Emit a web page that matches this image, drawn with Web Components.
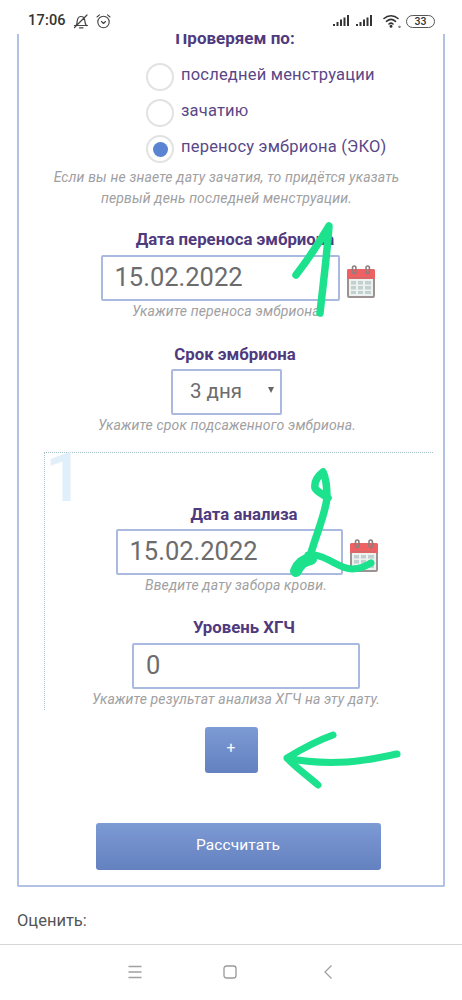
<!DOCTYPE html>
<html lang="ru">
<head>
<meta charset="utf-8">
<title>ХГЧ</title>
<style>
    html, body { margin: 0; padding: 0; background: #fff; }
    body { font-family: Roboto, "Noto Sans", sans-serif; }
</style>
</head>
<body>
<app-screen>
    <status-bar></status-bar>
    <page-view>
        <calc-card>
            <check-heading>Проверяем по:</check-heading>
            <radio-option>последней менструации</radio-option>
            <radio-option>зачатию</radio-option>
            <radio-option checked>переносу эмбриона (ЭКО)</radio-option>
            <hint-text style="--hint-right:9px">Если вы не знаете дату зачатия, то придётся указать<br>первый день последней менструации.</hint-text>

            <form-field label="Дата переноса эмбриона" hint="Укажите переноса эмбриона" style="margin-top:20px;--label-left:8px;--control-left:14px;--hint-right:10px">
                <date-input value="15.02.2022" width="239"></date-input>
            </form-field>
            <form-field label="Срок эмбриона" hint="Укажите срок подсаженного эмбриона." style="margin-top:22px;--label-left:8px;--control-right:9px;--hint-right:8px;--label-gap:5px">
                <select-box value="3 дня"></select-box>
            </form-field>

            <analysis-block number="1">
                <form-field label="Дата анализа" hint="Введите дату забора крови." style="--label-left:10px;--control-left:16px;--hint-right:6px;--label-gap:5px">
                    <date-input value="15.02.2022" width="227"></date-input>
                </form-field>
                <form-field label="Уровень ХГЧ" hint="Укажите результат анализа ХГЧ на эту дату." style="margin-top:21px;--label-left:10px;--control-left:14px;--hint-right:6px">
                    <text-box value="0" width="228"></text-box>
                </form-field>
            </analysis-block>

            <blue-button kind="add">+</blue-button>
            <blue-button kind="submit">Рассчитать</blue-button>
        </calc-card>
        <rate-line>Оценить:</rate-line>
    </page-view>
    <nav-bar></nav-bar>
    <ink-notes></ink-notes>
</app-screen>

<script>
    const define = (name, html, init) => {
        customElements.define(name, class extends HTMLElement {
            constructor() {
                super();
                const shadow = this.attachShadow({ mode: 'open' });
                const template = document.createElement('template');
                template.innerHTML = html;
                shadow.appendChild(template.content.cloneNode(true));
            }
            connectedCallback() {
                if (init) init(this, this.shadowRoot);
            }
        });
    };

    const calendarIcon = `
        <svg width="30" height="34" viewBox="0 0 30 34">
            <rect x="1" y="4" width="28" height="29" rx="2" fill="#9a9391"/>
            <rect x="3" y="14" width="24" height="17" fill="#edf1ef"/>
            <path d="M1 6q0-2 2-2h24q2 0 2 2v8H1z" fill="#ef6062"/>
            <rect x="3" y="12" width="24" height="1.5" fill="#cf6a6b"/>
            <g fill="#c3d0d0">
                <rect x="5" y="16" width="5" height="3.5"/><rect x="12" y="16" width="5" height="3.5"/><rect x="19" y="16" width="6" height="3.5"/>
                <rect x="5" y="21" width="5" height="3.5"/><rect x="12" y="21" width="5" height="3.5"/><rect x="19" y="21" width="6" height="3.5"/>
                <rect x="5" y="26" width="5" height="3"/><rect x="12" y="26" width="5" height="3"/><rect x="19" y="26" width="6" height="3"/>
            </g>
            <g fill="none" stroke="#8a7f7f" stroke-width="1.6">
                <rect x="6.5" y="1" width="3.4" height="7.5" rx="1.7"/>
                <rect x="20" y="1" width="3.4" height="7.5" rx="1.7"/>
            </g>
        </svg>`;

    define('app-screen', `
        <style>
            :host { display: flex; flex-direction: column; position: relative; width: 462px; height: 1000px; overflow: hidden; background: #fff; }
        </style>
        <slot></slot>
    `);

    define('status-bar', `
        <style>
            :host { display: flex; align-items: center; justify-content: space-between; height: 34px; flex: none; padding: 8px 27px 0 28px; box-sizing: border-box; background: #fff; color: #333; }
            .side { display: flex; align-items: center; }
            .time { font: 500 14.5px/20px Roboto, sans-serif; letter-spacing: .2px; margin-right: 7px; }
            svg { display: block; }
        </style>
        <div class="side">
            <span class="time">17:06</span>
            <svg width="16" height="16" viewBox="0 0 16 16" fill="none" stroke="#444" stroke-width="1.2" stroke-linecap="round" stroke-linejoin="round">
                <path d="M1.500 12.500h13M3 12.500c1.200-1.500 1-3 1.300-5 .3-2 1.900-4 3.700-4 2 0 3.500 1.800 3.800 3.900.2 1.900.2 3.600 1.500 5.100M6.500 14.800h3.500M1.500 14.500 14 2"/>
            </svg>
            <svg width="15" height="16" viewBox="0 0 15 16" fill="none" stroke="#444" stroke-width="1.1" stroke-linecap="round" stroke-linejoin="round" style="margin-left:7px">
                <circle cx="7.500" cy="9" r="5.700"/><path d="M5.500 8.500 7.500 10.500 9.500 8.500M1 4 3.500 1.800M14 4 11.500 1.800"/>
            </svg>
        </div>
        <div class="side">
            <svg width="17" height="12" viewBox="0 0 17 12" fill="#333"><rect x="0" y="9" width="2" height="2"/><rect x="3.500" y="7" width="2" height="4"/><rect x="7" y="4.500" width="2" height="6.500"/><rect x="10.500" y="2.500" width="2" height="8.500"/><rect x="14" y="0" width="2" height="11"/></svg>
            <svg width="17" height="12" viewBox="0 0 17 12" fill="#333" style="margin-left:6px"><rect x="0" y="9" width="2" height="2"/><rect x="3.500" y="7" width="2" height="4"/><rect x="7" y="4.500" width="2" height="6.500"/><rect x="10.500" y="2.500" width="2" height="8.500"/><rect x="14" y="0" width="2" height="11"/></svg>
            <svg width="18" height="14" viewBox="0 0 18 14" fill="none" stroke="#333" stroke-width="1.600" stroke-linecap="round" style="margin-left:10px">
                <path d="M1 4.500c4-3.700 10-3.700 14 0M3.500 7.300c2.700-2.400 6.300-2.400 9 0M6 10c1.300-1.100 2.700-1.100 4 0"/><circle cx="8" cy="12.300" r=".7" fill="#333"/><circle cx="16.500" cy="12.800" r=".3" fill="#333"/>
            </svg>
            <div style="margin-left:5px;width:29px;height:13px;box-sizing:border-box;border:1px solid #555;border-radius:7px;font:500 10.5px/11px Roboto,sans-serif;text-align:center;color:#333">33</div>
        </div>
    `);

    define('page-view', `
        <style>
            :host { display: block; flex: 1; min-height: 0; overflow: hidden; }
        </style>
        <slot></slot>
    `);

    define('calc-card', `
        <style>
            :host { display: flex; flex-direction: column; margin: 0 17px; height: 853px; box-sizing: border-box; border: solid #b1c2e4; border-width: 0 2px 2.5px; border-radius: 0 0 2px 2px; }
        </style>
        <slot></slot>
    `);

    define('check-heading', `
        <style>
            :host { display: block; margin: -6px 0 11px 8px; text-align: center; font: 700 17px/20px Roboto, sans-serif; color: #4f3a7e; }
        </style>
        <slot></slot>
    `);

    define('radio-option', `
        <style>
            :host { display: flex; height: 36px; padding-left: 127px; font: 400 16.5px/32px Roboto, sans-serif; letter-spacing: .2px; color: #5a4787; }
            .dot { flex: none; width: 28px; height: 28px; margin: 4px 7px 0 0; box-sizing: border-box; border: 2.5px solid #e2e2e2; border-radius: 50%; display: flex; align-items: center; justify-content: center; }
            :host([checked]) .dot::after { content: ""; width: 15px; height: 15px; border-radius: 50%; background: #5a84d2; }
        </style>
        <span class="dot"></span><span><slot></slot></span>
    `);

    define('hint-text', `
        <style>
            :host { display: block; margin-right: var(--hint-right, 0); text-align: center; font: italic 400 14px/21px Roboto, sans-serif; letter-spacing: .15px; color: #a0a0a2; }
        </style>
        <slot></slot>
    `);

    define('form-field', `
        <style>
            :host { display: flex; flex-direction: column; align-items: center; }
            .label { margin-left: var(--label-left, 0); margin-bottom: var(--label-gap, 6px); font: 700 16.8px/20px Roboto, sans-serif; color: #4f3a7e; }
            .control { margin-left: var(--control-left, 0); margin-right: var(--control-right, 0); }
            .hint { margin-right: var(--hint-right, 0); font: italic 400 14px/21px Roboto, sans-serif; letter-spacing: .15px; color: #a0a0a2; }
        </style>
        <div class="label"></div>
        <div class="control"><slot></slot></div>
        <div class="hint"></div>
    `, (el, root) => {
        root.querySelector('.label').textContent = el.getAttribute('label');
        root.querySelector('.hint').textContent = el.getAttribute('hint');
    });

    const boxStyle = `
        .box { box-sizing: border-box; height: 46px; padding-left: 12px; border: 2.5px solid #a9b9df; border-radius: 2px; background: #fff; font: 400 25.5px/41px Roboto, sans-serif; color: #6c6c6c; }
    `;

    define('text-box', `
        <style>:host { display: block; } ${boxStyle}</style>
        <div class="box"></div>
    `, (el, root) => {
        const box = root.querySelector('.box');
        box.textContent = el.getAttribute('value');
        box.style.width = el.getAttribute('width') + 'px';
    });

    define('date-input', `
        <style>
            :host { display: flex; align-items: flex-start; gap: 6px; }
            ${boxStyle}
            svg { display: block; margin-top: 10px; }
        </style>
        <div class="box"></div>
        ${calendarIcon}
    `, (el, root) => {
        const box = root.querySelector('.box');
        box.textContent = el.getAttribute('value');
        box.style.width = el.getAttribute('width') + 'px';
    });

    define('select-box', `
        <style>
            :host { display: block; }
            ${boxStyle}
            .box { position: relative; width: 111px; padding-left: 17px; font-size: 20.5px; }
            .arrow { position: absolute; right: 6px; top: 16px; width: 0; height: 0; border: solid transparent; border-width: 6px 3.5px 0; border-top-color: #666; }
        </style>
        <div class="box"><span class="value"></span><span class="arrow"></span></div>
    `, (el, root) => {
        root.querySelector('.value').textContent = el.getAttribute('value');
    });

    define('analysis-block', `
        <style>
            :host { display: block; position: relative; box-sizing: border-box; height: 258px; margin: 16px 10px 0 25px; padding-top: 51px; border-top: 1px dotted #a4bec6; border-left: 1px dotted #a4bec6; }
            .num { position: absolute; left: 0; top: -15px; font: 500 68px/80px Roboto, sans-serif; color: #e1effa; }
        </style>
        <span class="num"></span>
        <slot></slot>
    `, (el, root) => {
        root.querySelector('.num').textContent = el.getAttribute('number');
    });

    define('blue-button', `
        <style>
            :host { display: flex; align-items: center; justify-content: center; box-sizing: border-box; padding-bottom: 4px; border-radius: 3px; background: linear-gradient(#7c9ad4, #6481c0); color: #fff; font: 400 15.5px/20px Roboto, sans-serif; align-self: center; }
            :host([kind="add"]) { width: 53px; height: 46px; margin-top: 17px; }
            :host([kind="submit"]) { width: 285px; height: 47px; margin: 50px 0 0 14px; letter-spacing: .1px; }
        </style>
        <slot></slot>
    `);

    define('rate-line', `
        <style>
            :host { display: block; margin: 21px 17px 0; font: 400 16.5px/26px Roboto, sans-serif; color: #555; }
        </style>
        <slot></slot>
    `);

    define('nav-bar', `
        <style>
            :host { display: block; position: relative; flex: none; height: 56px; box-sizing: border-box; border-top: 1px solid #d6d6d8; background: #fff; }
            .items { display: flex; justify-content: center; align-items: center; gap: 81px; height: 53px; padding: 0 2px 0 0; }
            svg { display: block; }
        </style>
        <div class="items">
            <svg width="14" height="14" viewBox="0 0 14 14" stroke="#a0a0a0" stroke-width="1.300" fill="none"><path d="M0.500 1.500h13M0.500 7h13M0.500 12.500h13"/></svg>
            <svg width="14" height="14" viewBox="0 0 14 14" stroke="#999" stroke-width="1.300" fill="none"><rect x="1" y="1" width="12" height="12" rx="2.500"/></svg>
            <svg width="10" height="14" viewBox="0 0 10 14" stroke="#a0a0a0" stroke-width="1.300" fill="none" style="margin-left:5px"><path d="M8.500 .5 2 7l6.500 6.500"/></svg>
        </div>
    `);

    // the green marks somebody drew on top of the screenshot
    define('ink-notes', `
        <style>
            :host { display: block; position: absolute; inset: 0; pointer-events: none; }
            svg { display: block; }
        </style>
        <svg width="462" height="1000" viewBox="0 0 462 1000" fill="none" stroke="#1ce28d" stroke-linecap="round" stroke-linejoin="round">
            <path stroke-width="7.500" d="M296 275C306 262 319 243 329 226C327 255 323 285 320 313"/>
            <path stroke-width="7.500" d="M323 472C318 476 314 482 315 488C317 492 323 494 328 498M323 472C326 478 327 488 327 498C325 515 316 535 311 553"/>
            <path stroke-width="12" d="M296 571C299 564 304 560 311 559"/>
            <path stroke-width="7" d="M308 555C325 553 338 569 352 569C360 569 366 566 371 563"/>
            <path stroke-width="7" d="M333 735C316 741 300 750 287 758C296 768 308 776 318 785M287 758C305 762 330 763 347 762C365 761 382 757 397 754"/>
        </svg>
    `);
</script>
</body>
</html>
